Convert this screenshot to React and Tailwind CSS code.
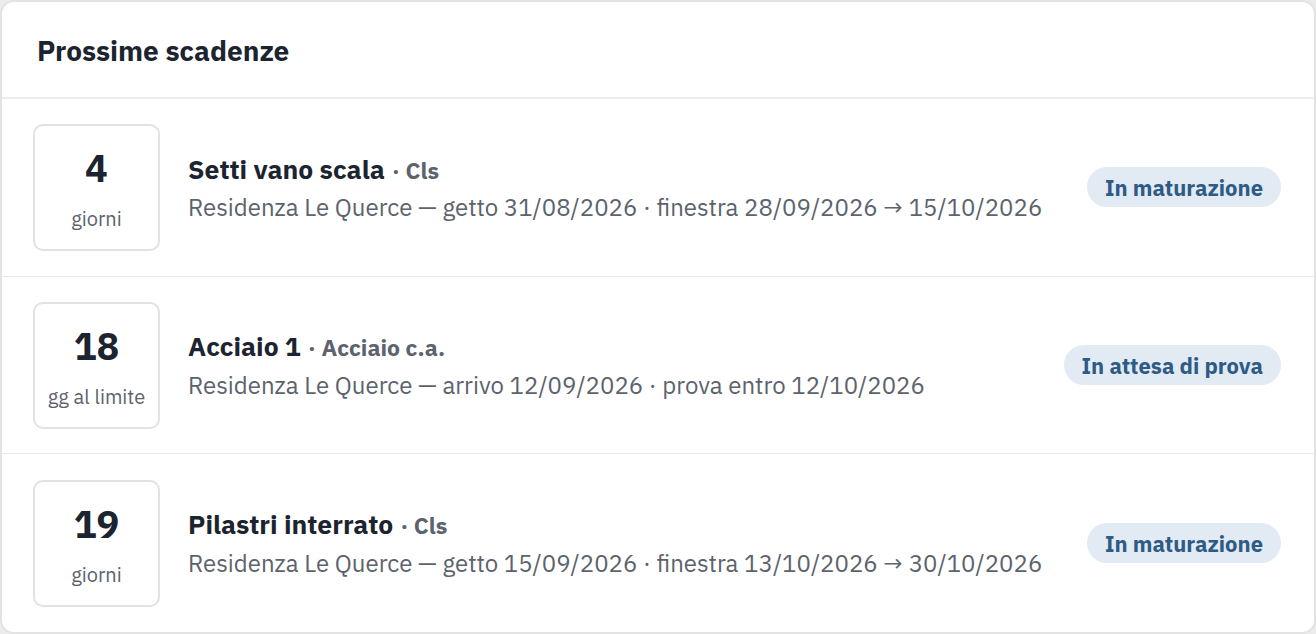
import React from 'react';

const items = [
  {
    days: '4',
    unit: 'giorni',
    title: 'Setti vano scala',
    kind: 'Cls',
    detail: 'Residenza Le Querce — getto 31/08/2026 · finestra 28/09/2026 → 15/10/2026',
    status: 'In maturazione',
  },
  {
    days: '18',
    unit: 'gg al limite',
    title: 'Acciaio 1',
    kind: 'Acciaio c.a.',
    detail: 'Residenza Le Querce — arrivo 12/09/2026 · prova entro 12/10/2026',
    status: 'In attesa di prova',
  },
  {
    days: '19',
    unit: 'giorni',
    title: 'Pilastri interrato',
    kind: 'Cls',
    detail: 'Residenza Le Querce — getto 15/09/2026 · finestra 13/10/2026 → 30/10/2026',
    status: 'In maturazione',
  },
];

function DeadlineRow({ item, last }) {
  return (
    <div className={`h-[178px] flex items-center pl-[31px] pr-[33px] ${last ? '' : 'border-b border-[#e9e9e9]'}`}>
      {/* countdown box */}
      <div className="w-[127px] h-[127px] shrink-0 rounded-[10px] border-2 border-[#e2e2e2] flex flex-col items-center pt-[20px]">
        <span className="text-[38px] leading-[44px] font-bold text-[#1c2430]">{item.days}</span>
        <span className="mt-[17px] text-[20px] leading-[24px] text-[#5c636c]">{item.unit}</span>
      </div>

      <div className="ml-[28px] flex-1 min-w-0">
        <div className="flex items-baseline text-[#1c2430]">
          <span className="text-[26.5px] font-bold leading-[32px]">{item.title}</span>
          <span className="ml-[7px] text-[23px] font-bold text-[#5c636c]">· {item.kind}</span>
        </div>
        <div className="mt-[5px] text-[24px] leading-[30px] text-[#5c636c]">{item.detail}</div>
      </div>

      <span className="shrink-0 h-[40px] px-[18px] flex items-center rounded-full bg-[#e2eaf3] text-[22px] font-bold text-[#2e5b86]">
        {item.status}
      </span>
    </div>
  );
}

export default function App() {
  return (
    <div className="w-[1316px] h-[634px] bg-[#ececec] font-['IBM_Plex_Sans','Noto_Sans',sans-serif]">
      <div className="h-full bg-white rounded-[14px] border-2 border-[#e3e3e3] flex flex-col overflow-hidden">
        <div className="h-[97px] shrink-0 flex items-center px-[35px] border-b-2 border-[#ececec]">
          <h2 className="text-[28px] font-bold text-[#1c2430] pt-[2px]">Prossime scadenze</h2>
        </div>
        {items.map((item, i) => (
          <DeadlineRow key={i} item={item} last={i === items.length - 1} />
        ))}
      </div>
    </div>
  );
}
